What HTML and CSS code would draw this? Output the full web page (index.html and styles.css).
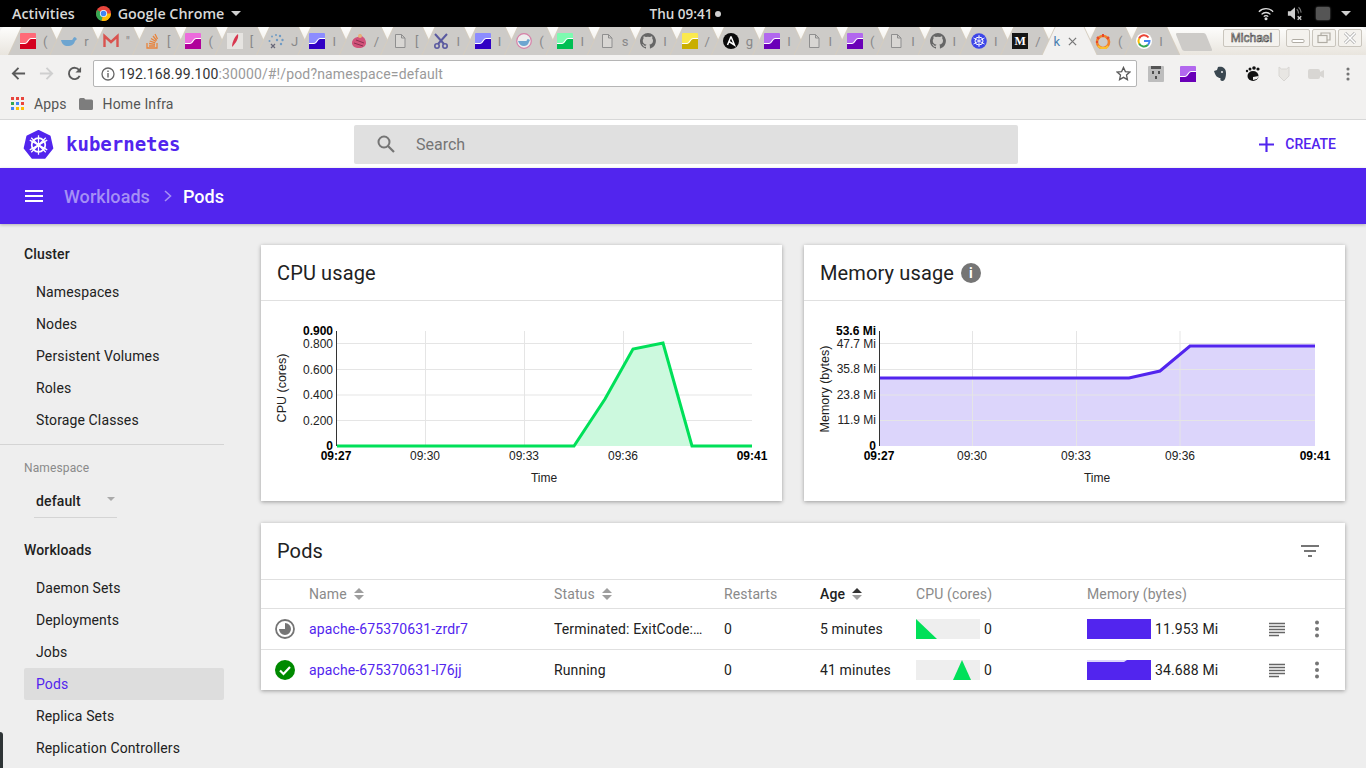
FILE: index.html

```html
<!DOCTYPE html>
<html>
<head>
    <meta charset="utf-8">
    <title>Pods - Kubernetes Dashboard</title>
    <link rel="stylesheet" href="styles.css">
</head>
<body>
    <svg class="defs" width="0" height="0">
        <symbol id="chart" viewBox="0 0 16 16">
            <rect width="16" height="16" rx="1" fill="var(--top)"/>
            <path d="M0 11h5c3 0 3-5 6-5h5v10H0z" fill="var(--bottom)"/>
            <path d="M0 10.5h5c3 0 3-5 6-5h5" fill="none" stroke="#fff" stroke-width="1.2"/>
        </symbol>
        <symbol id="doc" viewBox="0 0 16 16">
            <path d="M3.5 1.5h6l3.5 3.5v9.5h-9.5zM9.5 1.5v3.5h3.5" fill="#d8d6d3" stroke="#8f8f8f"/>
        </symbol>
        <symbol id="github" viewBox="0 0 16 16">
            <path fill="#666" d="M8 0a8 8 0 0 0-2.5 15.6c.4.1.5-.2.5-.4v-1.400c-2.200.5-2.700-1-2.700-1-.4-.9-.9-1.200-.9-1.200-.7-.5.1-.5.1-.5.8.1 1.200.8 1.200.8.7 1.200 1.900.9 2.300.7.1-.5.3-.9.5-1.100-1.800-.2-3.700-.9-3.700-4 0-.9.3-1.600.8-2.100-.1-.2-.4-1 .1-2.100 0 0 .7-.2 2.200.8a7.600 7.600 0 0 1 4 0c1.500-1 2.200-.8 2.200-.8.4 1.100.2 1.900.1 2.100.5.6.8 1.300.8 2.100 0 3.100-1.900 3.800-3.700 4 .3.3.6.8.6 1.500v2.200c0 .2.1.5.5.4A8 8 0 0 0 8 0z"/>
        </symbol>
        <symbol id="sort" viewBox="0 0 12 14">
            <path class="sort-up" d="M6 1l5 5H1z"/>
            <path class="sort-down" d="M1 8h10l-5 5z"/>
        </symbol>
        <symbol id="lines" viewBox="0 0 18 15">
            <path d="M1 1.500h16M1 4.500h16M1 7.500h16M1 10.500h16M1 13.500h10" stroke="#666" stroke-width="1.500"/>
        </symbol>
        <symbol id="dots" viewBox="0 0 4 18">
            <circle cx="2" cy="2.500" r="2" fill="#757575"/>
            <circle cx="2" cy="9" r="2" fill="#757575"/>
            <circle cx="2" cy="15.500" r="2" fill="#757575"/>
        </symbol>
    </svg>

    <div class="gnome-bar">
        <div class="gnome-left">
            <span>Activities</span>
            <span class="gnome-app">
                <svg class="chrome-logo" viewBox="0 0 16 16">
                    <circle cx="8" cy="8" r="8" fill="#e8453c"/>
                    <path d="M8 8L1.100 4L0 8a8 8 0 0 0 6 7.800z" fill="#34a853"/>
                    <path d="M8 8h8a8 8 0 0 1-10 7.800z" fill="#fbbc05"/>
                    <circle cx="8" cy="8" r="3.800" fill="#fff"/>
                    <circle cx="8" cy="8" r="3" fill="#4285f4"/>
                </svg>
                Google Chrome
                <i class="gnome-caret"></i>
            </span>
        </div>
        <div class="gnome-clock">Thu 09:41<i class="clock-dot"></i></div>
        <div class="gnome-right">
            <svg class="tray" viewBox="0 0 18 16">
                <path d="M1 6a11 11 0 0 1 16 0M4 9a7 7 0 0 1 10 0M6.500 11.500a3.500 3.500 0 0 1 5 0" fill="none" stroke="#ddd" stroke-width="1.500"/>
                <circle cx="9" cy="14" r="1.700" fill="#ddd"/>
            </svg>
            <svg class="tray" viewBox="0 0 18 16">
                <path d="M1 5.500h3l5-4.500v14l-5-4.500H1z" fill="#ccc"/>
                <path d="M11 3a7 7 0 0 1 2 5M13 1a9 9 0 0 1 3 6" fill="none" stroke="#777" stroke-width="1.300"/>
                <path d="M12 11l4 4M16 11l-4 4" stroke="#ccc" stroke-width="1.500"/>
            </svg>
            <i class="tray-battery"></i>
            <i class="gnome-caret"></i>
        </div>
    </div>

    <div class="tab-strip">
        <div class="tab"><svg class="fav chart-red"><use href="#chart"/></svg><span class="sliver">(</span></div>
        <div class="tab">
            <svg class="fav" viewBox="0 0 16 16"><path fill="#6ea5d0" d="M0 7h11c1 0 1-3 3-3l2 2-2 2c-1 4-4 5-7 5-4 0-6-2-7-6z"/></svg>
            <span class="sliver">r</span>
        </div>
        <div class="tab">
            <svg class="fav" viewBox="0 0 16 16"><path d="M1.500 14V3l6.500 6 6.500-6v11" fill="none" stroke="#d9534f" stroke-width="2.400"/></svg>
            <span class="sliver">"</span>
        </div>
        <div class="tab">
            <svg class="fav" viewBox="0 0 16 16"><path d="M3 10v5h10v-5M5 13h6M5 10.500l6 .8M5.700 8l5.600 1.800M7 5.500l5 3M9 3l3.700 4.500M11 1l2.500 5" fill="none" stroke="#e8843c" stroke-width="1.300"/></svg>
            <span class="sliver">[</span>
        </div>
        <div class="tab"><svg class="fav chart-magenta"><use href="#chart"/></svg><span class="sliver">(</span></div>
        <div class="tab">
            <svg class="fav" viewBox="0 0 16 16"><rect width="16" height="16" fill="#e6e4e1"/><path d="M11 1c1 4-2 9-6 13 0-4 2-10 6-13z" fill="#d8374f"/></svg>
            <span class="sliver">[</span>
        </div>
        <div class="tab">
            <svg class="fav" viewBox="0 0 16 16">
                <g fill="#6f9bc4"><circle cx="8" cy="2" r="1"/><circle cx="12" cy="3" r="1.200"/><circle cx="14.500" cy="7" r="1.200"/><circle cx="13" cy="11" r="1.200"/><circle cx="4" cy="3.500" r="1"/><circle cx="1.500" cy="8" r="1"/><circle cx="9" cy="7" r="1.200"/></g>
                <path d="M3 11l4 4M7 11l-4 4" stroke="#667" stroke-width="1.200"/>
            </svg>
            <span class="sliver">J</span>
        </div>
        <div class="tab"><svg class="fav chart-blue"><use href="#chart"/></svg><span class="sliver">I</span></div>
        <div class="tab">
            <svg class="fav" viewBox="0 0 16 16"><path d="M1 10c0-4 4-6 6-6l2-3 3 3c2 1 3 4 3 6 0 3-3 5-7 5s-7-2-7-5z" fill="#d2527a"/><circle cx="9" cy="3" r="2" fill="#e8b27a"/><path d="M3 10l9 3M5 7l8 3" stroke="#8a3050"/></svg>
            <span class="sliver">/</span>
        </div>
        <div class="tab"><svg class="fav"><use href="#doc"/></svg><span class="sliver">[</span></div>
        <div class="tab">
            <svg class="fav" viewBox="0 0 16 16"><path d="M2 1l9 10M14 1L5 11" stroke="#5a5aa0" stroke-width="2"/><circle cx="4" cy="13" r="2.200" fill="none" stroke="#5a5aa0" stroke-width="1.600"/><circle cx="12" cy="13" r="2.200" fill="none" stroke="#5a5aa0" stroke-width="1.600"/></svg>
            <span class="sliver">I</span>
        </div>
        <div class="tab"><svg class="fav chart-blue"><use href="#chart"/></svg><span class="sliver">I</span></div>
        <div class="tab">
            <svg class="fav" viewBox="0 0 16 16"><circle cx="8" cy="8" r="7.300" fill="#eee" stroke="#d77fa8" stroke-width="1.200"/><path fill="#6ea5d0" d="M2 8h8c1 0 1-2 2-2l2 1-1 2c-1 3-3 4-5 4-3 0-5-2-6-5z"/></svg>
            <span class="sliver">(</span>
        </div>
        <div class="tab"><svg class="fav chart-green"><use href="#chart"/></svg><span class="sliver">I</span></div>
        <div class="tab"><svg class="fav"><use href="#doc"/></svg><span class="sliver">s</span></div>
        <div class="tab"><svg class="fav"><use href="#github"/></svg><span class="sliver">I</span></div>
        <div class="tab"><svg class="fav chart-yellow"><use href="#chart"/></svg><span class="sliver">/</span></div>
        <div class="tab">
            <svg class="fav" viewBox="0 0 16 16"><circle cx="8" cy="8" r="8" fill="#0a0a0a"/><path d="M8 3.500l3.500 8.500L6 8.500M8 3.500L4.500 12" fill="none" stroke="#fff" stroke-width="1.500"/></svg>
            <span class="sliver">g</span>
        </div>
        <div class="tab"><svg class="fav chart-purple"><use href="#chart"/></svg><span class="sliver">I</span></div>
        <div class="tab"><svg class="fav"><use href="#doc"/></svg><span class="sliver">I</span></div>
        <div class="tab"><svg class="fav chart-purple"><use href="#chart"/></svg><span class="sliver">(</span></div>
        <div class="tab"><svg class="fav"><use href="#doc"/></svg><span class="sliver">I</span></div>
        <div class="tab"><svg class="fav"><use href="#github"/></svg><span class="sliver">I</span></div>
        <div class="tab">
            <svg class="fav" viewBox="0 0 16 16">
                <circle cx="8" cy="8" r="7.800" fill="#3d46e8"/>
                <circle cx="8" cy="8" r="4" fill="none" stroke="#fff"/>
                <path d="M8 2v12M2.500 5l11 6M13.500 5l-11 6" stroke="#fff" stroke-width=".8"/>
            </svg>
            <span class="sliver">I</span>
        </div>
        <div class="tab">
            <div class="fav fav-medium">M</div>
            <span class="sliver">/</span>
        </div>
        <div class="tab tab-active">
            <span class="sliver sliver-active">k</span>
            <svg class="tab-close" viewBox="0 0 10 10"><path d="M1 1l8 8M9 1l-8 8" stroke="#777" stroke-width="1.400"/></svg>
        </div>
        <div class="tab">
            <svg class="fav" viewBox="0 0 16 16">
                <circle cx="8" cy="9" r="6" fill="none" stroke="#f2812a" stroke-width="2.600"/>
                <path d="M8 1v3M2 4l2 2M14 4l-2 2M1 9h2" stroke="#e8472b" stroke-width="2"/>
                <path d="M3 13l3 2h5l2-2" fill="none" stroke="#fbc02d" stroke-width="2"/>
            </svg>
            <span class="sliver">(</span>
        </div>
        <div class="tab">
            <svg class="fav" viewBox="0 0 16 16">
                <circle cx="8" cy="8" r="8" fill="#fff"/>
                <path d="M12.500 4.500A5.500 5.500 0 0 0 3.100 5.500" fill="none" stroke="#ea4335" stroke-width="2"/>
                <path d="M3.100 5.500a5.500 5.500 0 0 0 0 5" fill="none" stroke="#fbbc05" stroke-width="2"/>
                <path d="M3.100 10.500a5.500 5.500 0 0 0 8.900 1.300" fill="none" stroke="#34a853" stroke-width="2"/>
                <path d="M12 11.800c1-1 1.500-2.300 1.500-3.800H8" fill="none" stroke="#4285f4" stroke-width="2"/>
            </svg>
            <span class="sliver">I</span>
        </div>
        <div class="new-tab"></div>
        <div class="window-controls">
            <span class="profile-btn">Michael</span>
            <span class="win-btn">
                <svg class="win-icon" viewBox="0 0 14 12"><rect x="1" y="7.500" width="12" height="3" rx="1" fill="#fff" stroke="#b0aca4"/></svg>
            </span>
            <span class="win-btn">
                <svg class="win-icon" viewBox="0 0 14 12"><path d="M4 3V1h9v7h-3" fill="none" stroke="#b0aca4" stroke-width="1.200"/><rect x="1" y="3.500" width="9" height="7" fill="#f4f2ee" stroke="#b0aca4" stroke-width="1.200"/></svg>
            </span>
            <span class="win-btn">
                <svg class="win-icon" viewBox="0 0 14 12"><path d="M2 1l10 10M12 1L2 11" stroke="#aaa" stroke-width="3"/><path d="M2 1l10 10M12 1L2 11" stroke="#fff" stroke-width="1.600"/></svg>
            </span>
        </div>
    </div>

    <div class="chrome-toolbar">
        <svg class="nav-icon" viewBox="0 0 16 16"><path d="M15 8H2M8 2L2 8l6 6" fill="none" stroke="#5a5a5a" stroke-width="2"/></svg>
        <svg class="nav-icon" viewBox="0 0 16 16"><path d="M1 8h13M8 2l6 6-6 6" fill="none" stroke="#cfcfcf" stroke-width="2"/></svg>
        <svg class="nav-icon" viewBox="0 0 16 16"><path d="M13.500 10.500A6 6 0 1 1 13 4.500" fill="none" stroke="#5a5a5a" stroke-width="2"/><path d="M15 1v6H9z" fill="#5a5a5a"/></svg>
        <div class="omnibox">
            <svg class="info-icon" viewBox="0 0 14 14"><circle cx="7" cy="7" r="6" fill="none" stroke="#666" stroke-width="1.300"/><path d="M7 6v4.500M7 3.500v1.400" stroke="#666" stroke-width="1.400"/></svg>
            <span class="url-host">192.168.99.100</span><span class="url-rest">:30000/#!/pod?namespace=default</span>
            <svg class="star-icon" viewBox="0 0 16 16"><path d="M8 1.500l2 4.500 4.800.5-3.600 3.200 1 4.800L8 12.100l-4.200 2.400 1-4.800L1.200 6.500 6 6z" fill="none" stroke="#5a5a5a" stroke-width="1.400"/></svg>
        </div>
        <div class="ext-icons">
            <svg class="ext" viewBox="0 0 16 16"><rect width="16" height="16" rx="1" fill="#bdbdbd"/><path d="M3 0h10v3H3z" fill="#555"/><path d="M5 5v3M11 5v3M8 10v3" stroke="#333" stroke-width="1.600"/></svg>
            <svg class="ext chart-purple"><use href="#chart"/></svg>
            <svg class="ext" viewBox="0 0 16 16"><path d="M2 5l3-1 1-3c3-1 8 0 8 6 0 4-1 8-3.500 8-2 0-2.500-1-2-3-3 0-5-2-6.500-7z" fill="#3a4750"/><circle cx="10" cy="6" r="1" fill="#f2f1f0"/></svg>
            <svg class="ext" viewBox="0 0 16 16"><ellipse cx="9" cy="10" rx="5.500" ry="5" fill="#111"/><path d="M9 11l6-1-2 3-4 1z" fill="#f2f1f0"/><circle cx="6" cy="3" r="1.500" fill="#111"/><circle cx="10" cy="2" r="1.800" fill="#111"/><circle cx="14" cy="3" r="1.600" fill="#111"/><circle cx="3" cy="5" r="1.200" fill="#111"/></svg>
            <svg class="ext" viewBox="0 0 16 16"><path d="M3 1l2.500 2h5L13 1v9l-5 5-5-5z" fill="#e8e6e3" stroke="#d8d6d3"/></svg>
            <svg class="ext" viewBox="0 0 16 16"><rect x="0" y="3" width="12" height="10" rx="2" fill="#d8d6d3"/><path d="M12 6l4-2v8l-4-2z" fill="#d8d6d3"/></svg>
            <svg class="ext-menu"><use href="#dots"/></svg>
        </div>
    </div>

    <div class="bookmarks">
        <span class="bookmark">
            <svg class="apps-icon" viewBox="0 0 13 13">
                <g fill="#e8453c"><rect width="3" height="3"/><rect x="5" width="3" height="3"/><rect x="10" width="3" height="3"/></g>
                <g fill="#34a853"><rect y="5" width="3" height="3"/></g>
                <g fill="#4285f4"><rect x="5" y="5" width="3" height="3"/><rect y="10" width="3" height="3"/></g>
                <g fill="#e8453c"><rect x="10" y="5" width="3" height="3"/></g>
                <g fill="#fbbc05"><rect x="5" y="10" width="3" height="3"/><rect x="10" y="10" width="3" height="3"/></g>
            </svg>
            Apps
        </span>
        <span class="bookmark">
            <svg class="folder-icon" viewBox="0 0 14 12"><path d="M0 1.500A1.500 1.500 0 0 1 1.500 0H5l1.500 1.500h6A1.500 1.500 0 0 1 14 3v7.500a1.500 1.500 0 0 1-1.500 1.500h-11A1.500 1.500 0 0 1 0 10.500z" fill="#7d7d7d"/></svg>
            Home Infra
        </span>
    </div>

    <div class="kd-toolbar">
        <div class="brand">
            <svg class="kube-logo" viewBox="0 0 32 32">
                <path d="M16 2l11.500 5.500 2.800 12.300-8 10H9.700l-8-10L4.500 7.500z" fill="#5225ee" stroke="#5225ee" stroke-width="2" stroke-linejoin="round"/>
                <circle cx="16" cy="16.500" r="7" fill="none" stroke="#fff" stroke-width="1.800"/>
                <path d="M16 6.500v20M7 11.500l18 10M25 11.500l-18 10M8.500 24l15-15M23.500 24l-15-15" stroke="#fff" stroke-width="1.300"/>
                <circle cx="16" cy="16.500" r="2.200" fill="#fff"/>
            </svg>
            <span class="brand-name">kubernetes</span>
        </div>
        <div class="search">
            <svg class="search-icon" viewBox="0 0 18 18"><circle cx="7" cy="7" r="5.500" fill="none" stroke="#757575" stroke-width="2"/><path d="M11 11l6 6" stroke="#757575" stroke-width="2.200"/></svg>
            <span>Search</span>
        </div>
        <div class="create">
            <svg class="create-icon" viewBox="0 0 14 14"><path d="M7 0v14M0 7h14" stroke="#5225ee" stroke-width="2"/></svg>
            CREATE
        </div>
    </div>

    <div class="kd-bar">
        <svg class="hamburger" viewBox="0 0 18 12"><path d="M0 1h18M0 6h18M0 11h18" stroke="#fff" stroke-width="2"/></svg>
        <span class="crumb-parent">Workloads</span>
        <svg class="crumb-sep" viewBox="0 0 8 12"><path d="M1 1l5.500 5L1 11" fill="none" stroke="#a58ff5" stroke-width="1.600"/></svg>
        <span class="crumb-current">Pods</span>
    </div>

    <div class="page">
        <nav class="sidebar">
            <div class="nav-title">Cluster</div>
            <a class="nav-item">Namespaces</a>
            <a class="nav-item">Nodes</a>
            <a class="nav-item">Persistent Volumes</a>
            <a class="nav-item">Roles</a>
            <a class="nav-item">Storage Classes</a>
            <div class="nav-divider"></div>
            <div class="ns-label">Namespace</div>
            <div class="ns-select">default<i class="ns-caret"></i></div>
            <div class="nav-title">Workloads</div>
            <a class="nav-item">Daemon Sets</a>
            <a class="nav-item">Deployments</a>
            <a class="nav-item">Jobs</a>
            <a class="nav-item active">Pods</a>
            <a class="nav-item">Replica Sets</a>
            <a class="nav-item">Replication Controllers</a>
            <i class="dock-edge"></i>
        </nav>

        <main class="content">
            <div class="graphs">
                <section class="card">
                    <div class="card-header"><h2>CPU usage</h2></div>
                    <svg class="graph" viewBox="261 301 521 200">
                        <g class="grid">
                            <path d="M337 343.500H752M337 369.500H752M337 395H752M337 420.500H752"/>
                            <path d="M425.500 331V446M524.500 331V446M623.500 331V446"/>
                        </g>
                        <path class="area-cpu" d="M337 446H574L605 399L633 349L663 343L692 446H752Z"/>
                        <path class="axis" d="M336.500 331V446"/>
                        <path class="line-cpu" d="M337 446H574L605 399L633 349L663 343L692 446H752"/>
                        <g class="tick tick-y">
                            <text class="strong" x="333" y="335">0.900</text>
                            <text x="333" y="348">0.800</text>
                            <text x="333" y="374">0.600</text>
                            <text x="333" y="399">0.400</text>
                            <text x="333" y="425">0.200</text>
                            <text class="strong" x="333" y="450">0</text>
                        </g>
                        <g class="tick tick-x">
                            <text class="strong" x="336" y="460">09:27</text>
                            <text x="425" y="460">09:30</text>
                            <text x="524" y="460">09:33</text>
                            <text x="623" y="460">09:36</text>
                            <text class="strong" x="752" y="460">09:41</text>
                            <text x="544" y="482">Time</text>
                            <text class="axis-label" transform="translate(286 388) rotate(-90)">CPU (cores)</text>
                        </g>
                    </svg>
                </section>
                <section class="card">
                    <div class="card-header">
                        <h2>Memory usage</h2>
                        <span class="info-badge">i</span>
                    </div>
                    <svg class="graph" viewBox="804 301 541 200">
                        <path class="area-mem" d="M880 378H1129L1160 371L1190 346H1315V446H880Z"/>
                        <g class="grid">
                            <path d="M880 343.500H1315M880 369.500H1315M880 395H1315M880 420.500H1315"/>
                            <path d="M972.500 331V446M1076.500 331V446M1180 331V446"/>
                        </g>
                        <path class="axis" d="M879.500 331V446"/>
                        <path class="line-mem" d="M880 378H1129L1160 371L1190 346H1315"/>
                        <g class="tick tick-y">
                            <text class="strong" x="876" y="335">53.6 Mi</text>
                            <text x="876" y="348">47.7 Mi</text>
                            <text x="876" y="373">35.8 Mi</text>
                            <text x="876" y="399">23.8 Mi</text>
                            <text x="876" y="424">11.9 Mi</text>
                            <text class="strong" x="876" y="450">0</text>
                        </g>
                        <g class="tick tick-x">
                            <text class="strong" x="879" y="460">09:27</text>
                            <text x="972" y="460">09:30</text>
                            <text x="1076" y="460">09:33</text>
                            <text x="1180" y="460">09:36</text>
                            <text class="strong" x="1315" y="460">09:41</text>
                            <text x="1097" y="482">Time</text>
                            <text class="axis-label" transform="translate(829 389) rotate(-90)">Memory (bytes)</text>
                        </g>
                    </svg>
                </section>
            </div>

            <section class="card pods">
                <div class="pods-header">
                    <h2>Pods</h2>
                    <svg class="filter-icon" viewBox="0 0 18 12"><path d="M0 1h18M3 6h12M7 11h4" stroke="#757575" stroke-width="2"/></svg>
                </div>
                <div class="pod-row pod-head">
                    <span></span>
                    <span>Name <svg class="sort"><use href="#sort"/></svg></span>
                    <span>Status <svg class="sort"><use href="#sort"/></svg></span>
                    <span>Restarts</span>
                    <span class="sorted">Age <svg class="sort"><use href="#sort"/></svg></span>
                    <span>CPU (cores)</span>
                    <span>Memory (bytes)</span>
                    <span></span>
                    <span></span>
                </div>
                <div class="pod-row">
                    <svg class="status-icon" viewBox="0 0 20 20">
                        <circle cx="10" cy="10" r="9" fill="#fff" stroke="#757575" stroke-width="1.800"/>
                        <path d="M10 4a6 6 0 1 1-6 6h6z" fill="#757575"/>
                    </svg>
                    <a class="pod-link">apache-675370631-zrdr7</a>
                    <span>Terminated: ExitCode:…</span>
                    <span>0</span>
                    <span>5 minutes</span>
                    <span class="spark-cell">
                        <svg class="spark" viewBox="0 0 64 20"><rect width="64" height="20" fill="#eee"/><path d="M0 0L21 20H0z" fill="#00e059"/></svg>
                        0
                    </span>
                    <span class="spark-cell">
                        <svg class="spark" viewBox="0 0 64 20"><rect width="64" height="20" fill="#5225ee"/></svg>
                        11.953 Mi
                    </span>
                    <svg class="row-lines"><use href="#lines"/></svg>
                    <svg class="row-dots"><use href="#dots"/></svg>
                </div>
                <div class="pod-row">
                    <svg class="status-icon" viewBox="0 0 20 20">
                        <circle cx="10" cy="10" r="10" fill="#008a00"/>
                        <path d="M5 10.500l3.500 3.500L15 7" fill="none" stroke="#fff" stroke-width="2.200"/>
                    </svg>
                    <a class="pod-link">apache-675370631-l76jj</a>
                    <span>Running</span>
                    <span>0</span>
                    <span>41 minutes</span>
                    <span class="spark-cell">
                        <svg class="spark" viewBox="0 0 64 20"><rect width="64" height="20" fill="#eee"/><path d="M37 20L46 0L55 20z" fill="#00e059"/></svg>
                        0
                    </span>
                    <span class="spark-cell">
                        <svg class="spark" viewBox="0 0 64 20"><rect width="64" height="20" fill="#5225ee"/><path d="M0 0H40L37 2H0z" fill="#dcd5fb"/></svg>
                        34.688 Mi
                    </span>
                    <svg class="row-lines"><use href="#lines"/></svg>
                    <svg class="row-dots"><use href="#dots"/></svg>
                </div>
            </section>
        </main>
    </div>
</body>
</html>
```

FILE: styles.css

```css
:root {
    --primary: #5225ee;
    --sidebar-bg: #eeeeee;
    --line: #e0e0e0;
    --text: #212121;
    --text-muted: #8a8a8a;
}

* {
    box-sizing: border-box;
}

html, body {
    margin: 0;
    height: 768px;
    overflow: hidden;
}

body {
    font-family: Roboto, "Liberation Sans", sans-serif;
    font-size: 14px;
    letter-spacing: 0.13px;
    color: var(--text);
    background-color: var(--sidebar-bg);
}

.defs {
    display: block;
    height: 0;
}

/* gnome top bar */
.gnome-bar {
    height: 27px;
    background-color: #000;
    color: #d8d8d8;
    font-family: "Open Sans", sans-serif;
    font-size: 14.3px;
    font-weight: 600;
    letter-spacing: 0;
    display: grid;
    grid-template-columns: 1fr auto 1fr;
    align-items: center;
}

.gnome-left {
    display: flex;
    align-items: center;
    padding-left: 12px;
    gap: 21px;
}

.gnome-app {
    display: flex;
    align-items: center;
    gap: 7px;
}

.chrome-logo {
    width: 15px;
    height: 15px;
}

.gnome-caret {
    flex: none;
    width: 10px;
    height: 5px;
    border-left: 5px solid transparent;
    border-right: 5px solid transparent;
    border-top: 5px solid #d0d0d0;
}

.gnome-clock {
    display: flex;
    align-items: center;
    gap: 3px;
    padding-left: 5px;
    font-size: 13.5px;
}

.clock-dot {
    width: 6px;
    height: 6px;
    border-radius: 50%;
    background-color: #d0d0d0;
}

.gnome-right {
    display: flex;
    justify-content: flex-end;
    align-items: center;
    gap: 11px;
    padding-right: 15px;
}

.tray {
    flex: none;
    width: 16px;
    height: 15px;
    margin-right: 2px;
}

.tray-battery {
    flex: none;
    width: 14px;
    height: 13px;
    background-color: #555;
    border-radius: 2px;
    box-shadow: 0 0 2px #777;
}

/* chrome tabs */
.tab-strip {
    height: 28px;
    display: flex;
    padding-left: 8px;
    background: linear-gradient(#fdfdfc, #e9e5de);
    border-radius: 5px 5px 0 0;
    position: relative;
}

.tab {
    flex: none;
    width: 56px;
    margin-right: -14.67px;
    height: 28px;
    display: flex;
    align-items: center;
    padding: 0 0 0 12px;
    position: relative;
}

.tab::before,
.tab::after {
    content: "";
    position: absolute;
    inset: 0;
    z-index: 0;
}

.tab::before {
    background-color: #d5cdbf;
    clip-path: polygon(13px 0, 43px 0, 56px 100%, 0 100%);
}

.tab::after {
    background-color: #cdcbc8;
    clip-path: polygon(14px 0, 42px 0, 55px 100%, 1px 100%);
}

.tab-active {
    z-index: 2;
}

.tab-active::after {
    background-color: #f2f1f0;
}

.fav {
    position: relative;
    z-index: 1;
    flex: none;
    width: 16px;
    height: 16px;
}

.fav-medium {
    background-color: #151515;
    color: #fff;
    font: bold 12px/16px "Liberation Serif", serif;
    text-align: center;
}

.sliver {
    position: relative;
    z-index: 1;
    margin-left: 7px;
    font-size: 13px;
    letter-spacing: 0;
    color: #888;
}

.sliver-active {
    width: 7px;
    margin-left: 0;
    color: #4a7fb0;
}

.tab-close {
    position: relative;
    z-index: 1;
    width: 9px;
    height: 9px;
    margin-left: 7px;
}

.chart-red { --top: #ff6a78; --bottom: #d4001f; }
.chart-magenta { --top: #ec6bdc; --bottom: #b0009a; }
.chart-blue { --top: #8c8cff; --bottom: #3000c4; }
.chart-green { --top: #7dfbb0; --bottom: #00bf53; }
.chart-yellow { --top: #fbe94e; --bottom: #c9ae00; }
.chart-purple { --top: #b268ee; --bottom: #6a00b8; }

.new-tab {
    width: 30px;
    height: 18px;
    margin: 6px 0 0 13px;
    background-color: #cdcbc8;
    transform: skewX(22deg);
    border-radius: 2px;
    flex: none;
}

.window-controls {
    position: absolute;
    right: 4px;
    top: 2px;
    display: flex;
    gap: 2px;
}

.profile-btn,
.win-btn {
    height: 18px;
    border: 1px solid #c9c5bd;
    border-radius: 2px;
    background-color: #f4f2ee;
    display: flex;
    align-items: center;
    justify-content: center;
}

.profile-btn {
    width: 57px;
    margin-right: 4px;
    font-family: "Liberation Sans", sans-serif;
    font-size: 12px;
    letter-spacing: 0;
    color: #f4f2ee;
    -webkit-text-stroke: 0.6px #444;
}

.win-btn {
    width: 24px;
}

.win-icon {
    width: 14px;
    height: 12px;
}

/* chrome toolbar */
.chrome-toolbar {
    height: 37px;
    background-color: #f2f1f0;
    display: flex;
    align-items: center;
    padding-left: 11px;
    gap: 11px;
}

.nav-icon {
    flex: none;
    width: 15px;
    height: 15px;
    margin-right: 2px;
}

.omnibox {
    flex: none;
    width: 1044px;
    height: 27px;
    margin-left: -2px;
    background-color: #fff;
    border: 1px solid #b5b5b5;
    border-radius: 2px;
    display: flex;
    align-items: center;
    padding-left: 7px;
}

.info-icon {
    width: 14px;
    height: 14px;
    margin-right: 4px;
}

.url-host {
    color: #333;
}

.url-rest {
    color: #9a9a9a;
}

.star-icon {
    width: 15px;
    height: 15px;
    margin-left: auto;
    margin-right: 5px;
}

.ext-icons {
    display: flex;
    align-items: center;
    gap: 16px;
}

.ext {
    flex: none;
    width: 16px;
    height: 16px;
}

.ext-menu {
    flex: none;
    width: 4px;
    height: 14px;
    margin-left: 6px;
}

.bookmarks {
    height: 28px;
    padding: 0 0 4px 11px;
    background-color: #f2f1f0;
    border-bottom: 1px solid #d8d8d8;
    display: flex;
    align-items: center;
    gap: 12px;
    color: #555;
}

.bookmark {
    display: flex;
    align-items: center;
    gap: 10px;
}

.apps-icon {
    width: 13px;
    height: 13px;
}

.folder-icon {
    width: 14px;
    height: 12px;
}

/* dashboard header */
.kd-toolbar {
    height: 48px;
    background-color: #fff;
    display: flex;
    align-items: center;
}

.brand {
    width: 354px;
    display: flex;
    align-items: center;
    padding-left: 23px;
    gap: 12px;
}

.kube-logo {
    width: 31px;
    height: 31px;
}

.brand-name {
    font-family: "DejaVu Sans Mono", monospace;
    font-size: 19px;
    font-weight: bold;
    letter-spacing: 0;
    color: var(--primary);
}

.search {
    width: 664px;
    height: 39px;
    background-color: #e0e0e0;
    border-radius: 2px;
    display: flex;
    align-items: center;
    padding-left: 23px;
    gap: 21px;
    font-size: 16px;
    letter-spacing: 0;
    color: #757575;
}

.search-icon {
    width: 18px;
    height: 18px;
}

.create {
    margin-left: auto;
    padding-right: 30px;
    display: flex;
    align-items: center;
    gap: 11px;
    color: var(--primary);
    font-weight: 500;
    letter-spacing: 0;
}

.create-icon {
    width: 15px;
    height: 15px;
}

.kd-bar {
    height: 56px;
    background-color: var(--primary);
    display: flex;
    align-items: center;
    padding-left: 25px;
    font-size: 18px;
    font-weight: 500;
    letter-spacing: 0.05px;
    box-shadow: 0 1px 3px rgba(0, 0, 0, 0.25);
    position: relative;
}

.hamburger {
    width: 18px;
    height: 12px;
    margin-right: 21px;
}

.crumb-parent {
    color: #a58ff5;
}

.crumb-sep {
    width: 8px;
    height: 12px;
    margin: 0 11px 0 14px;
}

.crumb-current {
    color: #fff;
}

/* sidebar */
.page {
    display: flex;
    height: 544px;
}

.sidebar {
    width: 224px;
    flex: none;
    padding-top: 14px;
    position: relative;
}

.nav-title {
    height: 32px;
    line-height: 32px;
    padding-left: 24px;
    margin-bottom: 6px;
    font-weight: 500;
}

.nav-item {
    display: block;
    height: 32px;
    line-height: 32px;
    margin-left: 24px;
    padding-left: 12px;
    border-radius: 2px;
}

.nav-item.active {
    background-color: #dddddd;
    color: var(--primary);
}

.nav-divider {
    height: 1px;
    margin-top: 8px;
    background-color: #d4d4d4;
}

.ns-label {
    margin-top: 16px;
    padding-left: 24px;
    font-size: 12px;
    line-height: 14px;
    color: var(--text-muted);
}

.ns-select {
    width: 83px;
    height: 33px;
    margin: 10px 0 16px 34px;
    padding: 4px 0 0 2px;
    line-height: 24px;
    font-weight: 500;
    border-bottom: 1px solid #d4d4d4;
    position: relative;
}

.ns-caret {
    position: absolute;
    right: 2px;
    top: 12px;
    border-left: 4px solid transparent;
    border-right: 4px solid transparent;
    border-top: 4px solid #aaa;
}

.dock-edge {
    position: absolute;
    left: 0;
    top: 508px;
    width: 3px;
    height: 36px;
    background-color: #2e3436;
    border-radius: 0 3px 0 0;
}

/* cards */
.content {
    flex: 1;
    padding: 21px 21px 0 37px;
}

.graphs {
    display: grid;
    grid-template-columns: 521px 541px;
    gap: 22px;
    margin-bottom: 22px;
}

.card {
    background-color: #fff;
    box-shadow: 0 1px 4px rgba(0, 0, 0, 0.35);
}

.card-header {
    height: 56px;
    border-bottom: 1px solid var(--line);
    display: flex;
    align-items: center;
    padding-left: 16px;
    gap: 7px;
}

h2 {
    margin: 0;
    font-size: 20px;
    font-weight: 400;
}

.info-badge {
    width: 20px;
    height: 20px;
    border-radius: 50%;
    background-color: #757575;
    color: #fff;
    font-size: 14px;
    font-weight: 700;
    line-height: 20px;
    text-align: center;
}

.graph {
    display: block;
    width: 100%;
    height: 200px;
    font-family: "Liberation Sans", sans-serif;
    font-size: 12px;
    letter-spacing: 0;
}

.grid path {
    stroke: #e5e5e5;
    fill: none;
}

.axis {
    stroke: #333;
    fill: none;
}

.line-cpu,
.line-mem {
    fill: none;
    stroke-width: 3px;
}

.line-cpu {
    stroke: #00e059;
}

.line-mem {
    stroke: var(--primary);
}

.area-cpu {
    fill: #ccf9de;
}

.area-mem {
    fill: #dcd5fb;
}

.tick text {
    fill: #222;
}

.tick-y text {
    text-anchor: end;
}

.tick-x text {
    text-anchor: middle;
}

.tick .strong {
    font-weight: bold;
    fill: #000;
}

.tick .axis-label {
    font-size: 12.5px;
}

/* pods table */
.pods-header {
    height: 56px;
    display: flex;
    align-items: center;
    justify-content: space-between;
    padding: 0 26px 0 16px;
}

.filter-icon {
    width: 18px;
    height: 12px;
}

.pod-row {
    display: grid;
    grid-template-columns: 48px 245px 170px 96px 96px 171px 170px 46px 28px;
    align-items: center;
    height: 41px;
    border-top: 1px solid var(--line);
}

.pod-head {
    height: 29px;
    color: var(--text-muted);
}

.pod-head span {
    display: flex;
    align-items: center;
    gap: 6px;
}

.pod-head .sorted {
    color: var(--text);
    font-weight: 500;
    --sort-up: #333;
}

.sort {
    width: 12px;
    height: 14px;
    fill: #9e9e9e;
}

.sort-up {
    fill: var(--sort-up, #9e9e9e);
}

.status-icon {
    width: 20px;
    height: 20px;
    margin-left: 14px;
}

.pod-link {
    color: var(--primary);
}

.spark-cell {
    display: flex;
    align-items: center;
    gap: 4px;
}

.spark {
    width: 64px;
    height: 20px;
}

.row-lines {
    width: 18px;
    height: 15px;
    margin-left: 11px;
}

.row-dots {
    width: 4px;
    height: 18px;
    justify-self: center;
}
```
